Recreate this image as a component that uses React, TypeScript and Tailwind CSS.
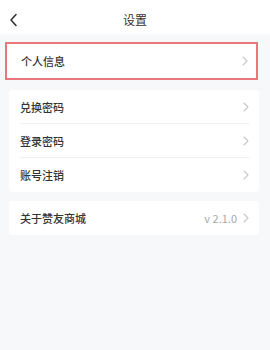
import React from "react";

const Chevron = ({ className = "" }: { className?: string }) => (
  <svg width="6" height="10" viewBox="0 0 6 10" className={className} fill="none">
    <path d="M1 1l4 4-4 4" stroke="#c8c8c8" strokeWidth="1.1" strokeLinecap="round" strokeLinejoin="round" />
  </svg>
);

const Row = ({ label, right, divider }: { label: string; right?: string; divider?: boolean }) => (
  <div className="relative flex h-[34px] items-center justify-between pl-[11px] pr-[10px]">
    <span className="text-[11px] font-medium text-[#333]">{label}</span>
    <div className="flex items-center gap-[6px]">
      {right && <span className="text-[11px] text-[#a8a8a8]">{right}</span>}
      <Chevron />
    </div>
    {divider && <div className="absolute bottom-0 left-[11px] right-[9px] h-px bg-[#f2f2f2]" />}
  </div>
);

export default function App() {
  return (
    <div
      className="w-[270px] h-[350px] bg-[#f7f8fa] overflow-hidden"
      style={{ fontFamily: '"Noto Sans CJK SC", "Noto Sans", sans-serif' }}
    >
      <div className="relative flex h-[34px] items-center justify-center bg-white">
        <svg width="9" height="14" viewBox="0 0 9 14" className="absolute left-[9px] top-[13px]" fill="none">
          <path d="M7 1.5L2 7l5 5.5" stroke="#333" strokeWidth="1.6" strokeLinecap="round" strokeLinejoin="round" />
        </svg>
        <span className="text-[12px] text-[#333] mt-[6px]">设置</span>
      </div>

      <div className="mt-[8px] ml-[5px] w-[253px] border-2 border-[#e8767a] bg-white">
        <div className="flex h-[34px] items-center justify-between pl-[14px] pr-[8px]">
          <span className="text-[11px] font-medium text-[#333]">个人信息</span>
          <Chevron />
        </div>
      </div>

      <div className="mt-[10px] ml-[9px] w-[250px] rounded-[4px] bg-white">
        <Row label="兑换密码" divider />
        <Row label="登录密码" divider />
        <Row label="账号注销" />
      </div>

      <div className="mt-[9px] ml-[9px] w-[250px] rounded-[4px] bg-white">
        <Row label="关于赞友商城" right="v 2.1.0" />
      </div>
    </div>
  );
}
